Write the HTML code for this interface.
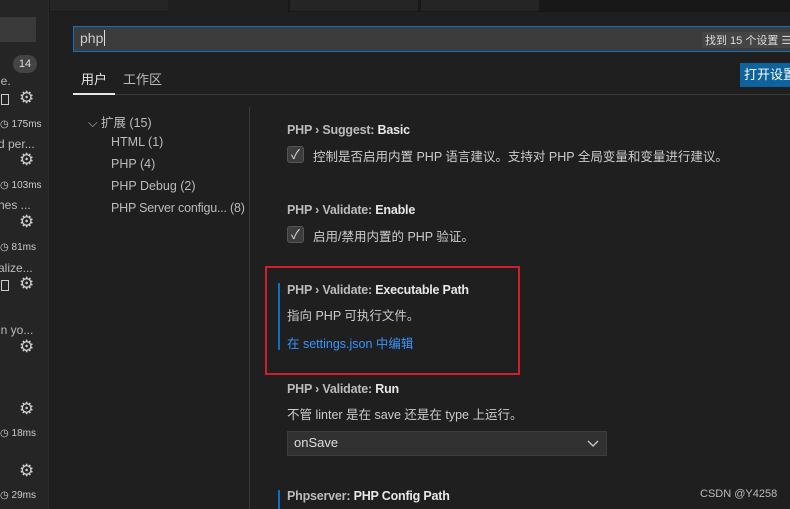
<!DOCTYPE html>
<html><head><meta charset="utf-8"><style>
*{margin:0;padding:0;box-sizing:border-box}
body{width:790px;height:509px;overflow:hidden;background:#1f1f1f;font-family:"Liberation Sans","Noto Sans CJK SC",sans-serif;color:#ccc;position:relative;font-size:13px}
.a{position:absolute;white-space:nowrap}
.side{left:0;top:0;width:49px;height:509px;background:#252526;border-right:1px solid #2b2b2b}
.t{font-size:12px;color:#bbb}
.ms{font-size:10px;color:#ccc}
.gear{font-size:17px;color:#ccc}
.h{font-size:12.5px;color:#bbb;font-weight:bold;letter-spacing:-0.2px}
.h b{color:#e7e7e7}
.cb{width:17px;height:17px;background:#3c3c3c;border:1px solid #555;border-radius:3px;color:#ddd;font-size:13px;line-height:15px;text-align:center}
</style></head><body>
<div class="a" style="left:0;top:0;width:790px;height:12px;background:#181818"></div>
<div class="a" style="left:50px;top:0;width:118px;height:11px;background:#252526"></div>
<div class="a" style="left:168px;top:0;width:120px;height:12px;background:#1f1f1f"></div>
<div class="a" style="left:290px;top:0;width:128px;height:11px;background:#252526"></div>
<div class="a" style="left:421px;top:0;width:118px;height:11px;background:#252526"></div>
<div class="a side"></div>
<div class="a" style="left:0;top:17px;width:36px;height:25px;background:#3a3a3a"></div>
<div class="a" style="left:13px;top:55px;width:24px;height:18px;background:#444;border-radius:9px;font-size:11px;color:#ddd;text-align:center;line-height:18px">14</div>
<div class="a t" style="left:-2px;top:74px">le.</div>
<div class="a gear" style="left:19px;top:88px">⚙</div>
<div class="a" style="left:1px;top:94px;width:8px;height:11px;border:1px solid #ccc"></div>
<div class="a ms" style="left:0;top:119px">◷ 175ms</div>
<div class="a t" style="left:-2px;top:137px">d per...</div>
<div class="a gear" style="left:19px;top:150px">⚙</div>
<div class="a ms" style="left:0;top:180px">◷ 103ms</div>
<div class="a t" style="left:-2px;top:198px">hes ...</div>
<div class="a gear" style="left:19px;top:212px">⚙</div>
<div class="a ms" style="left:0;top:242px">◷ 81ms</div>
<div class="a t" style="left:-2px;top:261px">alize...</div>
<div class="a gear" style="left:19px;top:274px">⚙</div>
<div class="a" style="left:1px;top:280px;width:8px;height:11px;border:1px solid #ccc"></div>
<div class="a t" style="left:-2px;top:323px">in yo...</div>
<div class="a gear" style="left:19px;top:337px">⚙</div>
<div class="a gear" style="left:19px;top:399px">⚙</div>
<div class="a ms" style="left:0;top:428px">◷ 18ms</div>
<div class="a gear" style="left:19px;top:461px">⚙</div>
<div class="a ms" style="left:0;top:490px">◷ 29ms</div>

<div class="a" style="left:73px;top:26px;width:720px;height:26px;background:#3c3c3c;border:1px solid #0e70c0"></div>
<div class="a" style="left:80px;top:30px;font-size:14px;color:#ccc">php<span style="border-left:1px solid #ddd;margin-left:1px"></span></div>
<div class="a" style="left:702px;top:32px;font-size:11px;color:#ddd;background:#454545;padding:0 3px">找到 15 个设置 <span style="color:#ccc">☰</span></div>
<div class="a" style="left:81px;top:69px;font-size:13px;color:#e7e7e7">用户</div>
<div class="a" style="left:123px;top:69px;font-size:13px;color:#bbb">工作区</div>
<div class="a" style="left:73px;top:94px;width:720px;height:1px;background:#3a3a3a"></div>
<div class="a" style="left:73px;top:93px;width:42px;height:2px;background:#e7e7e7"></div>
<div class="a" style="left:740px;top:63px;width:52px;height:24px;background:#0e639c;color:#fff;font-size:13px;line-height:24px;padding-left:4px">打开设置</div>

<div class="a" style="left:249px;top:107px;width:1px;height:402px;background:#3a3a3a"></div>
<div class="a" style="left:88px;top:112px;font-size:12.5px;color:#bbb">⌵ 扩展 (15)</div>
<div class="a" style="left:111px;top:135px;font-size:12.5px;color:#bbb">HTML (1)</div>
<div class="a" style="left:111px;top:157px;font-size:12.5px;color:#bbb">PHP (4)</div>
<div class="a" style="left:111px;top:179px;font-size:12.5px;color:#bbb">PHP Debug (2)</div>
<div class="a" style="left:111px;top:201px;font-size:12.5px;color:#bbb;letter-spacing:-0.2px">PHP Server configu... (8)</div>

<div class="a h" style="left:287px;top:123px">PHP › Suggest: <b>Basic</b></div>
<div class="a cb" style="left:287px;top:146px">✓</div>
<div class="a" style="left:313px;top:146px;font-size:12.5px;color:#ccc">控制是否启用内置 PHP 语言建议。支持对 PHP 全局变量和变量进行建议。</div>
<div class="a h" style="left:287px;top:203px">PHP › Validate: <b>Enable</b></div>
<div class="a cb" style="left:287px;top:226px">✓</div>
<div class="a" style="left:313px;top:226px;font-size:12.5px;color:#ccc">启用/禁用内置的 PHP 验证。</div>

<div class="a" style="left:265px;top:266px;width:255px;height:109px;border:2px solid #d01f2a"></div>
<div class="a" style="left:278px;top:283px;width:2px;height:67px;background:#0e70c0"></div>
<div class="a h" style="left:287px;top:283px">PHP › Validate: <b>Executable Path</b></div>
<div class="a" style="left:287px;top:305px;font-size:12.5px;color:#ccc">指向 PHP 可执行文件。</div>
<div class="a" style="left:287px;top:333px;font-size:12.5px;color:#3794ff">在 settings.json 中编辑</div>

<div class="a h" style="left:287px;top:382px">PHP › Validate: <b>Run</b></div>
<div class="a" style="left:287px;top:404px;font-size:12.5px;color:#ccc">不管 linter 是在 save 还是在 type 上运行。</div>
<div class="a" style="left:287px;top:431px;width:320px;height:25px;background:#313131;border:1px solid #3c3c3c"></div>
<div class="a" style="left:294px;top:435px;font-size:13px;color:#ddd">onSave</div>
<svg class="a" style="left:587px;top:438px" width="12" height="10"><path d="M1 3l5 5 5-5" stroke="#ccc" fill="none" stroke-width="1.3"/></svg>
<div class="a" style="left:278px;top:490px;width:2px;height:19px;background:#0e70c0"></div>
<div class="a h" style="left:287px;top:489px">Phpserver: <b>PHP Config Path</b></div>
<div class="a" style="left:700px;top:488px;font-size:11px;color:#bbb">CSDN @Y4258</div>
</body></html>
